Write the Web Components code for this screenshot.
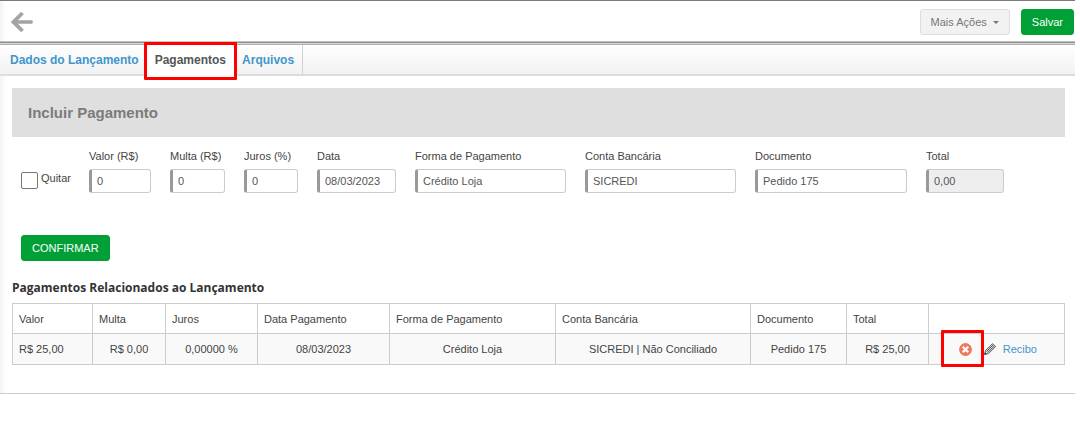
<!DOCTYPE html>
<html lang="pt-BR">
<head>
<meta charset="utf-8">
<title>Pagamentos</title>
<style>
  body {
    margin: 0;
    background: #fff;
    color: #444;
    font-family: "Liberation Sans", Arial, sans-serif;
    font-size: 11px;
  }
</style>
</head>
<body>
<pay-page>
  <top-bar slot="top">
    <pay-button kind="plain" caret>Mais Ações</pay-button>
    <pay-button>Salvar</pay-button>
  </top-bar>
  <tab-bar slot="tabs">
    <tab-item>Dados do Lançamento</tab-item>
    <tab-item active>Pagamentos</tab-item>
    <tab-item>Arquivos</tab-item>
  </tab-bar>
  <payment-form heading="Incluir Pagamento">
    <pay-field label="Valor (R$)" value="0"></pay-field>
    <pay-field label="Multa (R$)" value="0"></pay-field>
    <pay-field label="Juros (%)" value="0"></pay-field>
    <pay-field label="Data" value="08/03/2023"></pay-field>
    <pay-field label="Forma de Pagamento" value="Crédito Loja"></pay-field>
    <pay-field label="Conta Bancária" value="SICREDI"></pay-field>
    <pay-field label="Documento" value="Pedido 175"></pay-field>
    <pay-field label="Total" value="0,00" locked></pay-field>
    <pay-button slot="action">CONFIRMAR</pay-button>
  </payment-form>
  <payment-table heading="Pagamentos Relacionados ao Lançamento"></payment-table>
</pay-page>

<script>
class PayPage extends HTMLElement {
  constructor() {
    super();
    this.attachShadow({ mode: "open" });
    this.shadowRoot.innerHTML = `
    <style>
      :host {
        display: block;
        margin-right: 5px;
        border-bottom: 1px solid #ccc;
        background: linear-gradient(to right, #f3f3f3, #fff 6px);
      }
      main {
        padding: 12px 10px 28px 12px;
      }
    </style>
    <slot name="top"></slot>
    <slot name="tabs"></slot>
    <main><slot></slot></main>
    `;
  }
}

class TopBar extends HTMLElement {
  constructor() {
    super();
    this.attachShadow({ mode: "open" });
    this.shadowRoot.innerHTML = `
    <style>
      :host {
        display: block;
      }
      header {
        display: flex;
        align-items: center;
        gap: 11px;
        border-top: 1px solid #7b7a76;
        padding: 8px 1px 6px 11px;
      }
      .back {
        margin-right: auto;
        border: 0;
        padding: 0;
        background: none;
        display: flex;
      }
      .edge {
        height: 4px;
        background: linear-gradient(#c4c4c4 1px, #8c8c8c 1px 2px, #dcdcdc 2px 3px, #adadad 3px);
      }
    </style>
    <header>
      <button class="back" aria-label="Voltar">
        <svg width="22" height="22" viewBox="0 0 22 22" fill="none" stroke="#a3a3a3">
          <path d="M11.5 2 L2.5 11 L11.5 20" stroke-width="3.8"/>
          <path d="M3 11 H20.3" stroke-width="3.4" stroke-linecap="round"/>
        </svg>
      </button>
      <slot></slot>
    </header>
    <div class="edge"></div>
    `;
  }
}

class PayButton extends HTMLElement {
  constructor() {
    super();
    this.attachShadow({ mode: "open" });
    this.shadowRoot.innerHTML = `
    <style>
      :host {
        display: inline-block;
      }
      button {
        display: flex;
        align-items: center;
        gap: 6px;
        height: 26px;
        border: 1px solid #00a036;
        border-radius: 3px;
        padding: 0 10px;
        background: #00a036;
        color: #fff;
        font: inherit;
      }
      :host([kind="plain"]) button {
        border-color: #ddd;
        background: #f2f2f2;
        color: #777;
      }
      .caret {
        display: none;
        border: 3px solid transparent;
        border-top-color: #777;
        border-bottom: 0;
      }
      :host([caret]) .caret {
        display: block;
      }
    </style>
    <button><slot></slot><span class="caret"></span></button>
    `;
  }
}

class TabBar extends HTMLElement {
  constructor() {
    super();
    this.attachShadow({ mode: "open" });
    this.shadowRoot.innerHTML = `
    <style>
      :host {
        display: block;
      }
      nav {
        display: flex;
        height: 29px;
        padding-left: 2px;
        border-bottom: 2px solid #ddd;
        background: linear-gradient(#fff, #f2f2f2);
      }
      nav::after {
        content: "";
        border-left: 1px solid #d0d0d0;
      }
    </style>
    <nav><slot></slot></nav>
    `;
  }
}

class TabItem extends HTMLElement {
  constructor() {
    super();
    this.attachShadow({ mode: "open" });
    this.shadowRoot.innerHTML = `
    <style>
      :host {
        display: block;
        position: relative;
      }
      a {
        display: block;
        padding: 0 8px;
        color: #3f96cb;
        font-size: 12px;
        font-weight: bold;
        line-height: 30px;
        text-decoration: none;
      }
      :host([active]) {
        z-index: 1;
      }
      :host([active]) a {
        background: #fff;
        color: #555;
      }
      /* highlight frame, reaches a little past the bar */
      :host([active])::after {
        content: "";
        position: absolute;
        inset: -3px -3px -6px -3px;
        border: 3px solid #f00;
        border-radius: 1px;
        pointer-events: none;
      }
      :host([active]) {
        box-shadow: 0 3px #fff;
      }
    </style>
    <a href="#"><slot></slot></a>
    `;
  }
}

class PayField extends HTMLElement {
  constructor() {
    super();
    this.attachShadow({ mode: "open" });
    this.shadowRoot.innerHTML = `
    <style>
      :host {
        display: block;
        min-width: 0;
      }
      label {
        display: block;
        margin-bottom: 6px;
        line-height: 14px;
        white-space: nowrap;
      }
      input {
        display: block;
        box-sizing: border-box;
        width: 100%;
        height: 24px;
        border: 1px solid #ccc;
        border-left: 3px solid #999;
        border-radius: 3px;
        padding: 0 5px 1px;
        background: #fff;
        color: #555;
        font: inherit;
      }
      input[readonly] {
        background: #eee;
      }
    </style>
    <label for="field"></label>
    <input id="field" type="text">
    `;
  }

  connectedCallback() {
    const input = this.shadowRoot.querySelector("input");
    this.shadowRoot.querySelector("label").textContent = this.getAttribute("label");
    input.value = this.getAttribute("value");
    input.readOnly = this.hasAttribute("locked");
  }
}

class PaymentForm extends HTMLElement {
  constructor() {
    super();
    this.attachShadow({ mode: "open" });
    this.shadowRoot.innerHTML = `
    <style>
      :host {
        display: block;
      }
      h2 {
        margin: 0;
        padding: 0 16px;
        background: #dfdfdf;
        color: #7b7b7b;
        font-size: 15px;
        line-height: 49px;
      }
      form {
        padding: 12px 61px 0 9px;
      }
      .fields {
        display: grid;
        grid-template-columns: 49px 62fr 55fr 54fr 79fr 151fr 151fr 152fr 78fr;
        column-gap: 19px;
      }
      .settle {
        display: flex;
        gap: 3px;
        padding-top: 22px;
        line-height: 14px;
      }
      .settle input {
        appearance: none;
        flex: none;
        width: 17px;
        height: 17px;
        margin: 1px 0 0;
        border: 1px solid #767676;
        border-radius: 2px;
        background: #fff;
      }
      .action {
        display: flex;
        padding-top: 42px;
      }
    </style>
    <h2></h2>
    <form>
      <div class="fields">
        <div class="settle">
          <input type="checkbox" id="settle">
          <label for="settle">Quitar</label>
        </div>
        <slot></slot>
      </div>
      <div class="action"><slot name="action"></slot></div>
    </form>
    `;
  }

  connectedCallback() {
    this.shadowRoot.querySelector("h2").textContent = this.getAttribute("heading");
  }
}

class PaymentTable extends HTMLElement {
  constructor() {
    super();
    this.attachShadow({ mode: "open" });
    this.shadowRoot.innerHTML = `
    <style>
      :host {
        display: block;
        padding-top: 18px;
      }
      h3 {
        margin: 0 0 6px;
        color: #333;
        font: bold 12px/18px "Open Sans", sans-serif;
      }
      table {
        width: 100%;
        table-layout: fixed;
        border-collapse: collapse;
      }
      th, td {
        height: 30px;
        box-sizing: border-box;
        border: 1px solid #ccc;
        padding: 0 6px;
        font-weight: normal;
        white-space: nowrap;
      }
      th {
        text-align: left;
      }
      td {
        height: 31px;
        background: #f9f9f9;
        text-align: center;
      }
      td:first-child {
        text-align: left;
      }
      .tools {
        display: flex;
        align-items: center;
        justify-content: flex-end;
        padding-right: 21px;
      }
      button {
        display: flex;
        border: 0;
        padding: 0;
        background: none;
      }
      .remove {
        position: relative;
        margin-right: 12px;
      }
      .remove::after {
        content: "";
        position: absolute;
        inset: -13px -12px -11px -18px;
        border: 3px solid #f00;
        border-radius: 1px;
        pointer-events: none;
      }
      a {
        margin-left: 7px;
        color: #3f96cb;
        text-decoration: none;
      }
    </style>
    <h3></h3>
    <table>
      <colgroup>
        <col style="width: 80px"><col style="width: 73px"><col style="width: 92px">
        <col style="width: 132px"><col style="width: 166px"><col style="width: 195px">
        <col style="width: 96px"><col style="width: 82px"><col style="width: 136px">
      </colgroup>
      <thead>
        <tr>
          <th>Valor</th><th>Multa</th><th>Juros</th><th>Data Pagamento</th>
          <th>Forma de Pagamento</th><th>Conta Bancária</th><th>Documento</th><th>Total</th><th></th>
        </tr>
      </thead>
      <tbody>
        <tr>
          <td>R$ 25,00</td><td>R$ 0,00</td><td>0,00000 %</td><td>08/03/2023</td>
          <td>Crédito Loja</td><td>SICREDI | Não Conciliado</td><td>Pedido 175</td><td>R$ 25,00</td>
          <td>
            <div class="tools">
              <button class="remove" aria-label="Excluir">
                <svg width="13" height="13" viewBox="0 0 13 13">
                  <circle cx="6.5" cy="6.5" r="6.4" fill="#ec7a5a"/>
                  <path d="M3.8 3.8 L9.2 9.2 M9.2 3.8 L3.8 9.2" stroke="#fff" stroke-width="2.3"/>
                </svg>
              </button>
              <button aria-label="Editar">
                <svg width="12" height="12" viewBox="0 0 12 12">
                  <path d="M0.5 11.5 L1.5 7.5 L8.5 0.7 L11.6 3.6 L4.5 10.6 Z" fill="#ddd" stroke="#555" stroke-width="0.9"/>
                  <path d="M2.5 8.5 L9.3 1.8 M3.6 9.6 L10.5 2.8" stroke="#444" stroke-width="0.9"/>
                  <path d="M0.3 11.8 L1 9.3 L2.8 11 Z" fill="#333"/>
                </svg>
              </button>
              <a href="#">Recibo</a>
            </div>
          </td>
        </tr>
      </tbody>
    </table>
    `;
  }

  connectedCallback() {
    this.shadowRoot.querySelector("h3").textContent = this.getAttribute("heading");
  }
}

customElements.define("pay-page", PayPage);
customElements.define("top-bar", TopBar);
customElements.define("pay-button", PayButton);
customElements.define("tab-bar", TabBar);
customElements.define("tab-item", TabItem);
customElements.define("pay-field", PayField);
customElements.define("payment-form", PaymentForm);
customElements.define("payment-table", PaymentTable);
</script>
</body>
</html>
